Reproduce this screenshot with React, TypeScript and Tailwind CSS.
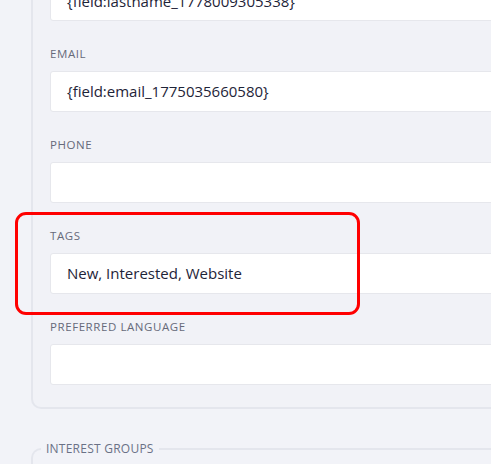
import React from "react";

const fields = [
  { label: "Email", value: "{field:email_1775035660580}" },
  { label: "Phone", value: "" },
  { label: "Tags", value: "New, Interested, Website" },
  { label: "Preferred Language", value: "" },
];

function Field({ label, value }: { label: string; value: string }) {
  return (
    <div className="mt-[25px]">
      <div className="text-[11.5px] leading-4 uppercase tracking-[0.05em] text-[#666a7a]">{label}</div>
      <div className="mt-[9px] h-[41px] rounded-[3px] border border-[#e6e7ec] bg-white px-4 flex items-center text-[15px] text-[#1e2438] whitespace-nowrap">
        {value}
      </div>
    </div>
  );
}

export default function App() {
  return (
    <div
      className="relative h-[464px] w-[491px] overflow-hidden bg-[#f2f3f8]"
      style={{ fontFamily: '"Open Sans", "Noto Sans", sans-serif' }}
    >
      <div className="-mt-[20px] ml-[31px] w-[600px] rounded-b-[10px] border-2 border-t-0 border-[#e4e6ed] bg-[#f1f2f7] pl-[17px] pb-[22px]">
        {/* last name, cut off at the top */}
        <div className="h-[41px] rounded-[3px] border border-[#e6e7ec] bg-white px-4 flex items-center pt-[2px] text-[15px] text-[#1e2438] whitespace-nowrap">
          {"{field:lastname_1778009305338}"}
        </div>
        {fields.map((f) => (
          <Field key={f.label} label={f.label} value={f.value} />
        ))}
      </div>

      <fieldset className="mt-[31px] ml-[31px] w-[600px] h-[40px] rounded-t-[10px] border-2 border-b-0 border-[#e4e6ed] px-2">
        <legend className="px-[5px] text-[12px] uppercase tracking-[0.02em] text-[#6a7186]">Interest Groups</legend>
      </fieldset>

      {/* highlight annotation */}
      <div className="absolute left-[15px] top-[212px] h-[103px] w-[345px] rounded-[11px] border-[3.5px] border-[#ff0000]" />
    </div>
  );
}
